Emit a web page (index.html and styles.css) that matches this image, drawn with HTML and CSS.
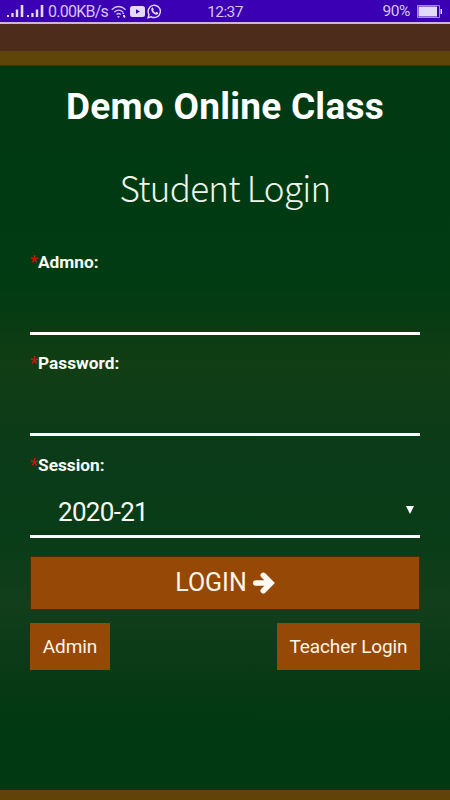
FILE: index.html
```html
<!DOCTYPE html>
<html lang="en">
<head>
<meta charset="utf-8">
<title>Demo Online Class</title>
<link rel="stylesheet" href="styles.css">
</head>
<body>
<header class="status">
  <div class="status-left">
    <svg class="signal" viewBox="0 0 17 13"><path d="M0 10h2v2H0zM4.300 8h2.300v4H4.300zM8.800 4.500h2.400V12H8.800zM13.700 0h2.600v12h-2.600z"/></svg>
    <svg class="signal second" viewBox="0 0 17 13"><path d="M0 10h2v2H0zM4.300 8h2.300v4H4.300zM8.800 4.500h2.400V12H8.800zM13.700 0h2.600v12h-2.600z"/></svg>
    <span class="speed">0.00KB/s</span>
    <svg class="wifi" viewBox="0 0 16 14"><path d="M.7 4.700Q7.500-1.700 14.600 4.700M3.100 7.200Q7.600 3 12.200 7.200M5.500 9.500Q7.600 7.500 9.800 9.500"/><path class="solid" d="M6 11.200h3L7.500 13zM11 9l1.300-1.600L13.500 9zM12 10h2v1.500h1L13.500 13 12 11.500z"/></svg>
    <svg class="youtube" viewBox="0 0 15 11"><rect width="15" height="11" rx="2.500"/><path d="M6 3.300v4.400L9.800 5.500z"/></svg>
    <svg class="whatsapp" viewBox="0 0 15 15"><path class="ring" d="M1.100 13.700l.9-3.200A6.100 6.100 0 1 1 4.400 12.800z"/><path d="M4.900 3.800c.5-.4 1-.2 1.200.2l.6 1.400c.1.4-.5.8-.5 1.100.5 1 1.300 1.800 2.400 2.300.4 0 .7-.8 1.100-.7l1.400.7c.4.2.1 1.100-.3 1.500-1.200 1-3.200.2-4.600-1C4.900 8.100 3.500 5.500 4.900 3.800z"/></svg>
  </div>
  <span class="clock">12:37</span>
  <div class="status-right">
    <span>90%</span>
    <svg class="battery" viewBox="0 0 26 13"><path class="case" d="M.5.5h22v12H.5z"/><path d="M1.500 1.500h18.500v10H1.500zM23.500 4h1.500v5h-1.500z"/></svg>
  </div>
</header>
<main class="board">
  <h1>Demo Online Class</h1>
  <h2>Student Login</h2>
  <form class="form">
    <div class="field">
      <label for="admno"><span class="required">*</span>Admno:</label>
      <input id="admno" type="text">
    </div>
    <div class="field">
      <label for="password"><span class="required">*</span>Password:</label>
      <input id="password" type="password">
    </div>
    <div class="field">
      <label><span class="required">*</span>Session:</label>
      <div class="select"><span>2020-21</span><svg viewBox="0 0 8 8"><path d="M0 0h8L4 8z"/></svg></div>
    </div>
    <button class="login" type="button"><span>LOGIN</span><svg viewBox="0 0 22 22"><path d="M2.800 11h14M10.300 3.300l7.700 7.700-7.700 7.700"/></svg></button>
    <div class="links">
      <button class="link admin" type="button">Admin</button>
      <button class="link teacher" type="button">Teacher Login</button>
    </div>
  </form>
</main>
</body>
</html>
```
FILE: styles.css
```css
* { box-sizing: border-box; }
body { margin: 0; height: 800px; overflow: hidden; font-family: Roboto, sans-serif; color: #fff; background: #003912; }
.status { height: 24px; padding: 0 7px; display: grid; grid-template-columns: 1fr auto 1fr; background: #3b00b3; border-bottom: 2px solid #ccb6dc; color: #d7c5fa; font-size: 15.5px; line-height: 23px; }
.status svg { fill: #e3d9fa; flex: none; }
.status-left, .status-right { display: flex; align-items: center; height: 23px; }
.clock { letter-spacing: -.6px; margin-top: 1px; }
.status-right { justify-content: flex-end; letter-spacing: -.4px; }
.signal { width: 17px; height: 13px; }
.second { margin-left: 3px; }
.speed { margin-left: 4px; width: 61px; font-size: 16px; letter-spacing: -.75px; white-space: nowrap; }
.wifi { width: 16px; height: 14px; margin-left: 2px; }
.status .wifi path { fill: none; stroke: #d7c5fa; stroke-width: 1.2; }
.status .wifi .solid { fill: #e3d9fa; stroke: none; }
.youtube { width: 15px; height: 11px; margin-left: 3px; }
.status .youtube path { fill: #3b00b3; }
.whatsapp { width: 15px; height: 15px; margin-left: 2px; }
.status .whatsapp .ring { fill: none; stroke: #e3d9fa; stroke-width: 1.4; }
.battery { width: 26px; height: 13px; margin-left: 7px; }
.status .battery .case { fill: none; stroke: #a58bd8; }
.board { height: 776px; padding: 0 30px; border-bottom: 10px solid #604306; background: linear-gradient(#4e2c1b 0 27px, #5f4508 27px 41px, #003912 42px, #003b12 256px, #083b12 295px, #113e14 340px, #0b3b19 425px, #093c18 510px, #123e1b 580px, #073914 660px, #003912 710px); }
h1 { margin: 0; padding-top: 61px; font-size: 37px; line-height: 44px; font-weight: 700; letter-spacing: .25px; text-align: center; white-space: nowrap; }
h2 { margin: 35px 0 0; height: 48px; line-height: 46px; font-family: "Noto Sans CJK SC", sans-serif; font-size: 35px; font-weight: 200; letter-spacing: -.75px; text-align: center; white-space: nowrap; color: #edf5ea; }
.form { padding-top: 37px; }
.field { height: 101.300px; display: flex; flex-direction: column; }
label { font-size: 17.3px; line-height: 25px; font-weight: 700; color: #f8fbf5; }
.required { display: inline-block; width: 8px; color: #cf1108; font-weight: 500; font-size: 18px; }
input { width: 100%; height: 59px; margin-top: 1px; padding: 0 28px; border: 0; border-bottom: 3px solid #fff; background: transparent; color: #fff; font: 26px Roboto, sans-serif; outline: none; }
.select { height: 60px; padding: 11px 6px 0 28px; display: flex; align-items: center; justify-content: space-between; border-bottom: 3px solid #fff; font-size: 26px; letter-spacing: -.7px; line-height: 46px; color: #f7fbf4; }
.select svg { width: 8px; height: 8px; margin-top: -4px; fill: #fff; }
button { color: #fff4e5; font-family: Roboto, sans-serif; }
.login { width: 100%; height: 54px; margin-top: 3px; padding: 0; display: flex; align-items: center; justify-content: center; gap: 6px; border: 1px solid #4c2908; background: #964807; font-size: 25px; }
.login svg { width: 22px; height: 22px; fill: none; stroke: #fffaf2; stroke-width: 5.500; stroke-linecap: round; stroke-linejoin: miter; }
.links { margin-top: 13px; display: flex; justify-content: space-between; }
.link { height: 47px; padding: 0; border: 0; background: #964807; font-size: 19px; letter-spacing: -.1px; white-space: nowrap; }
.admin { width: 80px; }
.teacher { width: 143px; }
```
